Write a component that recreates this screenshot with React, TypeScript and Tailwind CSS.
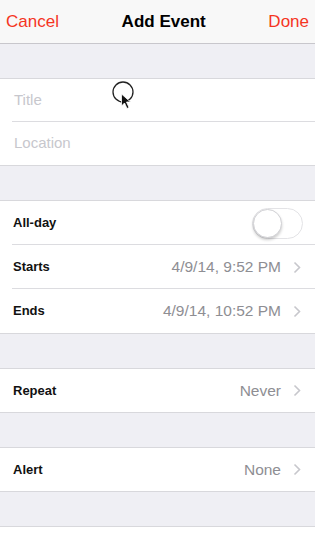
import React from "react";

const Chevron = () => (
  <svg width="8" height="13" viewBox="0 0 8 13" className="ml-[12px]">
    <path d="M1.5 1.5 L6.5 6.5 L1.5 11.5" fill="none" stroke="#c7c7cc" strokeWidth="1.6" />
  </svg>
);

const Row = ({ label, value, last, short }: { label: string; value?: string; last?: boolean; short?: boolean }) => (
  <div className={`relative ${short ? "h-[43px]" : "h-[44px]"} flex items-center pl-[13px] pr-[14px] bg-white`}>
    <span className="text-[13px] font-bold text-[#111]">{label}</span>
    <div className="flex-1" />
    {value && <span className="text-[15.5px] text-[#8e8e93]">{value}</span>}
    {value && <Chevron />}
    {!last && <div className="absolute left-[12px] right-0 bottom-0 h-px bg-[#dcdce0]" />}
  </div>
);

const Gap = () => <div className="h-[35px] bg-[#efeff4] border-b border-[#d8d8dc]" />;

export default function App() {
  return (
    <div
      className="relative w-[315px] h-[543px] overflow-hidden bg-[#efeff4]"
      style={{ fontFamily: '"Liberation Sans", Arial, sans-serif' }}
    >
      <div className="h-[44px] bg-[#f8f8f8] border-b border-[#c8c7cc] flex items-center justify-between px-[6px]">
        <span className="text-[17px] text-[#f5351f]">Cancel</span>
        <span className="text-[17px] font-bold text-black">Add Event</span>
        <span className="text-[17px] text-[#f5351f]">Done</span>
      </div>
      <div className="h-[35px] bg-[#efeff4] border-b border-[#d8d8dc]" />
      <div className="bg-white border-b border-[#d8d8dc]">
        <div className="relative h-[43px] flex items-center pl-[14px]">
          <span className="text-[15px] text-[#c7c7cd]">Title</span>
          <div className="absolute left-[12px] right-0 bottom-0 h-px bg-[#dcdce0]" />
        </div>
        <div className="h-[43px] flex items-center pl-[14px]">
          <span className="text-[15px] text-[#c7c7cd]">Location</span>
        </div>
      </div>
      <Gap />
      <div className="bg-white border-b border-[#d8d8dc]">
        <div className="relative h-[44px] flex items-center pl-[13px] pr-[12px]">
          <span className="text-[13px] font-bold text-[#111]">All-day</span>
          <div className="flex-1" />
          <div className="w-[51px] h-[31px] rounded-full border border-[#e3e3e6] bg-white relative">
            <div className="absolute left-0 top-0 w-[29px] h-[29px] rounded-full bg-white border border-[#d0d0d4] shadow-[0_2px_3px_rgba(0,0,0,0.2)]" />
          </div>
          <div className="absolute left-[12px] right-0 bottom-0 h-px bg-[#dcdce0]" />
        </div>
        <Row label="Starts" value="4/9/14, 9:52 PM" />
        <Row label="Ends" value="4/9/14, 10:52 PM" last />
      </div>
      <Gap />
      <div className="bg-white border-b border-[#d8d8dc]">
        <Row label="Repeat" value="Never" last short />
      </div>
      <Gap />
      <div className="bg-white border-b border-[#d8d8dc]">
        <Row label="Alert" value="None" last short />
      </div>
      <Gap />
      <div className="bg-white">
        <Row label="Show As" value="Busy" last />
      </div>
      <svg className="absolute left-[110px] top-[80px]" width="26" height="32" viewBox="0 0 26 32">
        <circle cx="13" cy="12" r="10" fill="none" stroke="#222" strokeWidth="1.3" />
        <path d="M11.5 14 L11.5 26 L14.5 23 L17 28.5 L19 27.5 L16.5 22 L20.5 22 Z" fill="#111" stroke="#fff" strokeWidth="0.8" />
      </svg>
    </div>
  );
}
